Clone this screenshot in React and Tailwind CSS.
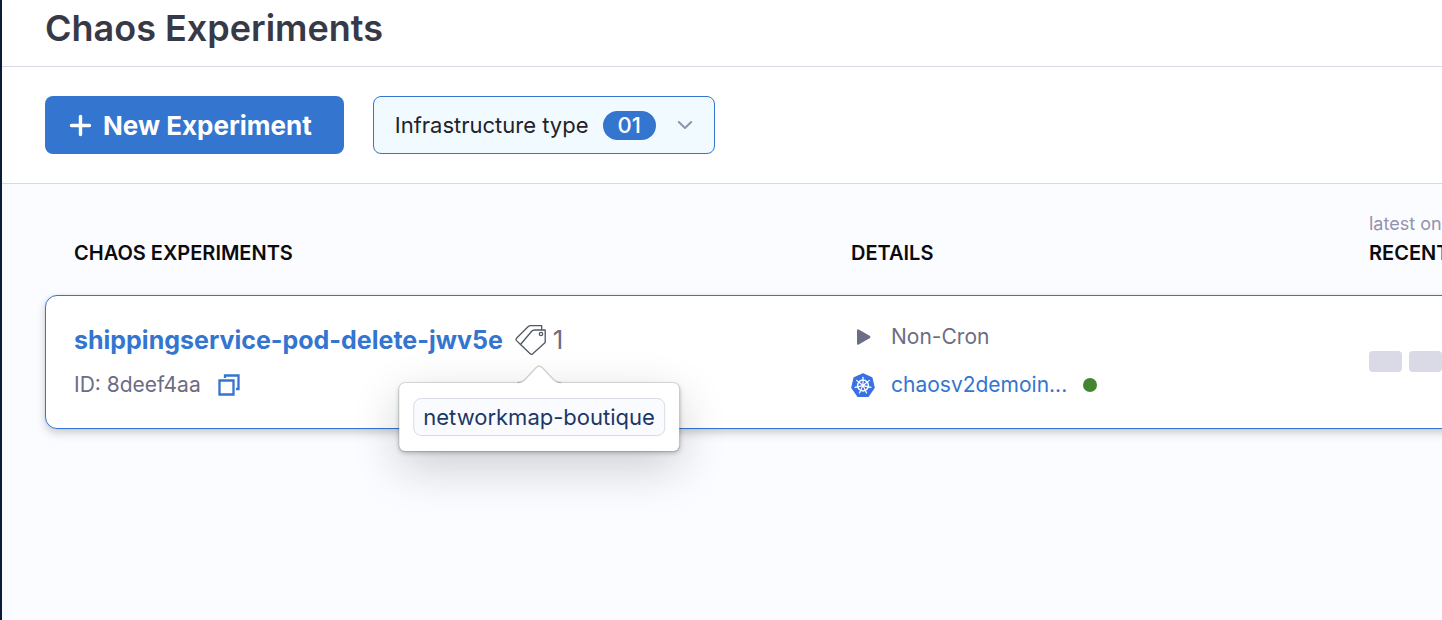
import React from "react";

function PlusIcon() {
  return (
    <svg className="size-6 shrink-0" viewBox="0 0 24 24" fill="none" stroke="currentColor" strokeWidth="3.400" strokeLinecap="round" aria-hidden="true">
      <path d="M11.500 3.500v18M2.500 12.500h18" />
    </svg>
  );
}

function ChevronIcon() {
  return (
    <svg className="h-4 w-4 shrink-0 text-[#9293ab]" viewBox="0 0 16 16" fill="none" stroke="currentColor" strokeWidth="2" strokeLinecap="round" strokeLinejoin="round" aria-hidden="true">
      <path d="M1.800 5 8 11l6.200-6" />
    </svg>
  );
}

function CopyIcon() {
  return (
    <svg className="size-6" viewBox="0 0 24 24" fill="none" stroke="currentColor" strokeWidth="2.300" aria-hidden="true">
      <path d="M8 5V2.500h13.500V16H19" />
      <path d="M2.500 7.500h14v14h-14z" />
    </svg>
  );
}

function TagsIcon() {
  return (
    <svg className="size-8 text-[#4f5865]" viewBox="0 0 32 32" fill="none" stroke="currentColor" strokeWidth="1.300" strokeLinejoin="round" aria-hidden="true">
      <path d="M5.500 20.500 16.500 7.500q1.300-1.500 3-1.500H30.200V18.500L17.500 30q-1.200.9-2.300-.2z" />
      <path d="M5.500 20.500 1.500 16.600q-1-1.100 0-2.300L13 2.800q1.200-1.200 2.800-1.200h10.900V6" />
      <circle cx="26" cy="10" r="1.700" />
    </svg>
  );
}

function PlayIcon() {
  return (
    <svg className="size-6 text-[#6b6d85]" viewBox="0 0 24 24" fill="currentColor" aria-hidden="true">
      <path d="M6 5.500Q6 3.600 7.700 4.500L19 10.900Q20 11.900 19 12.900L7.700 19.400Q6 20.300 6 18.400z" />
    </svg>
  );
}

function KubernetesIcon() {
  const spokes = [0, 51.43, 102.86, 154.29, 205.71, 257.14, 308.57];
  return (
    <svg className="size-6" viewBox="0 0 24 24" aria-hidden="true">
      <path d="M12 .8 20.900 4.900 23.200 14.700 17.200 23.300H6.800L.8 14.700 3.100 4.900z" fill="#3970e4" stroke="#3970e4" strokeWidth="1.200" strokeLinejoin="round" />
      <g fill="none" stroke="#fff" strokeWidth="1.200" strokeLinecap="round">
        <circle cx="12" cy="12.500" r="5.400" strokeWidth="1.500" />
        {spokes.map((angle) => (
          <path key={angle} d="M12 11V4.300" transform={`rotate(${angle} 12 12.500)`} />
        ))}
      </g>
      <circle cx="12" cy="12.500" r="1.500" fill="#fff" />
    </svg>
  );
}

function TagPopover({ tag }) {
  return (
    <div role="tooltip" className="absolute top-full left-1/2 z-10 mt-[27px] -translate-x-1/2 rounded-md bg-white px-[14px] py-[15px] shadow-[0_0_0_1px_rgba(16,22,26,0.12),0_2px_4px_rgba(16,22,26,0.25),0_16px_48px_rgba(16,22,26,0.2)]">
      <svg className="absolute bottom-full left-1/2 -mb-px h-5 w-12 -translate-x-1/2" viewBox="0 0 48 20" aria-hidden="true">
        <path d="M2 20Q7 19 10 15.500L21 4Q24 1 27 4L38 15.500Q41 19 46 20z" fill="#fff" />
        <path d="M2 18.500Q7 18.500 10 15.200L21 3.500Q24 .8 27 3.500L38 15.200Q41 18.500 46 18.500" fill="none" stroke="#10161a" strokeOpacity=".18" strokeWidth="1.500" />
      </svg>
      <span className="block rounded-lg border border-[#d9dae5] bg-[#fafbff] px-[9px] text-[22px] leading-9 whitespace-nowrap text-[#1b3767]">
        {tag}
      </span>
    </div>
  );
}

const columns = "grid grid-cols-[3fr_2fr_2fr] px-7";

function ExperimentsTable() {
  return (
    <table className="block w-full min-w-[1871px] text-left">
      <thead className="block">
        <tr className={`${columns} items-end border-x border-transparent text-[20px] leading-6 text-[#0b0b0d]`}>
          <th className="font-semibold">CHAOS EXPERIMENTS</th>
          <th className="font-semibold">DETAILS</th>
          <th className="font-semibold">
            <span className="mb-[5px] block text-[18px] font-normal text-[#9293ab]">latest on the left</span>
            RECENT RUNS
          </th>
        </tr>
      </thead>
      <tbody className="mt-[30px] block">
        <tr className={`${columns} rounded-xl border border-[#3375cf] bg-white pt-[25px] pb-[27px] shadow-[0_0_2px_rgba(40,41,61,0.08),0_4px_8px_rgba(96,97,112,0.3)]`}>
          <td>
            <div className="flex h-[38px] items-center">
              <a href="#experiment" className="text-[25px] leading-8 font-bold text-[#3375cf]">
                shippingservice-pod-delete-jwv5e
              </a>
              <div className="relative ml-3 flex items-center">
                <button type="button" aria-label="Tags" className="flex items-center gap-1.5 text-[26px] leading-8 text-[#6b6d85]">
                  <TagsIcon />
                  <span>1</span>
                </button>
                <TagPopover tag="networkmap-boutique" />
              </div>
            </div>
            <div className="mt-[10px] flex h-8 items-center gap-4 text-[21px] leading-8 text-[#6b6d85]">
              <span>ID: 8deef4aa</span>
              <button type="button" aria-label="Copy ID" className="text-[#3375cf]">
                <CopyIcon />
              </button>
            </div>
          </td>
          <td className="text-[21px] leading-8 text-[#6b6d85]">
            <div className="flex items-center gap-4">
              <PlayIcon />
              <span>Non-Cron</span>
            </div>
            <div className="mt-4 flex items-center gap-4">
              <KubernetesIcon />
              <a href="#infrastructure" className="text-[#3375cf]">chaosv2demoin...</a>
              <span role="img" aria-label="Connected" className="size-[14px] rounded-full bg-[#42872f]" />
            </div>
          </td>
          <td className="flex items-center gap-[7px]">
            {[1, 2, 3, 4, 5, 6, 7, 8, 9, 10].map((run) => (
              <span key={run} className="h-[21px] w-[33px] rounded-sm bg-[#d9dae5]" />
            ))}
          </td>
        </tr>
      </tbody>
    </table>
  );
}

export default function App() {
  return (
    <div className="flex min-h-screen overflow-hidden bg-[#fbfcff] font-[Inter,sans-serif]">
      <aside className="z-10 w-0.5 shrink-0 bg-[#0a1b39] shadow-[0_0_16px_rgba(40,41,61,0.12)]" />
      <div className="flex min-w-0 flex-1 flex-col">
        <header className="border-b border-[#d9dae5] bg-white px-[43px] pt-1.5 pb-4">
          <h1 className="text-[36px] leading-11 font-semibold text-[#383946]">Chaos Experiments</h1>
        </header>
        <div className="flex gap-[29px] border-b border-[#d9dae5] bg-white px-[43px] py-[29px]">
          <button type="button" className="flex h-[58px] items-center gap-2.5 rounded-lg bg-[#3375cf] pr-8 pl-6 text-[26px] font-bold text-white">
            <PlusIcon />
            New Experiment
          </button>
          <button type="button" className="flex h-[58px] items-center rounded-lg border border-[#3375cf] bg-[#f1fafe] px-[21px] text-[22px] text-[#22222a]">
            Infrastructure type
            <span className="mr-[21px] ml-[14px] rounded-full bg-[#3375cf] px-[15px] leading-[29px] font-medium text-white">01</span>
            <ChevronIcon />
          </button>
        </div>
        <main className="flex-1 overflow-hidden px-[43px] pt-7 pb-12">
          <ExperimentsTable />
        </main>
      </div>
    </div>
  );
}
